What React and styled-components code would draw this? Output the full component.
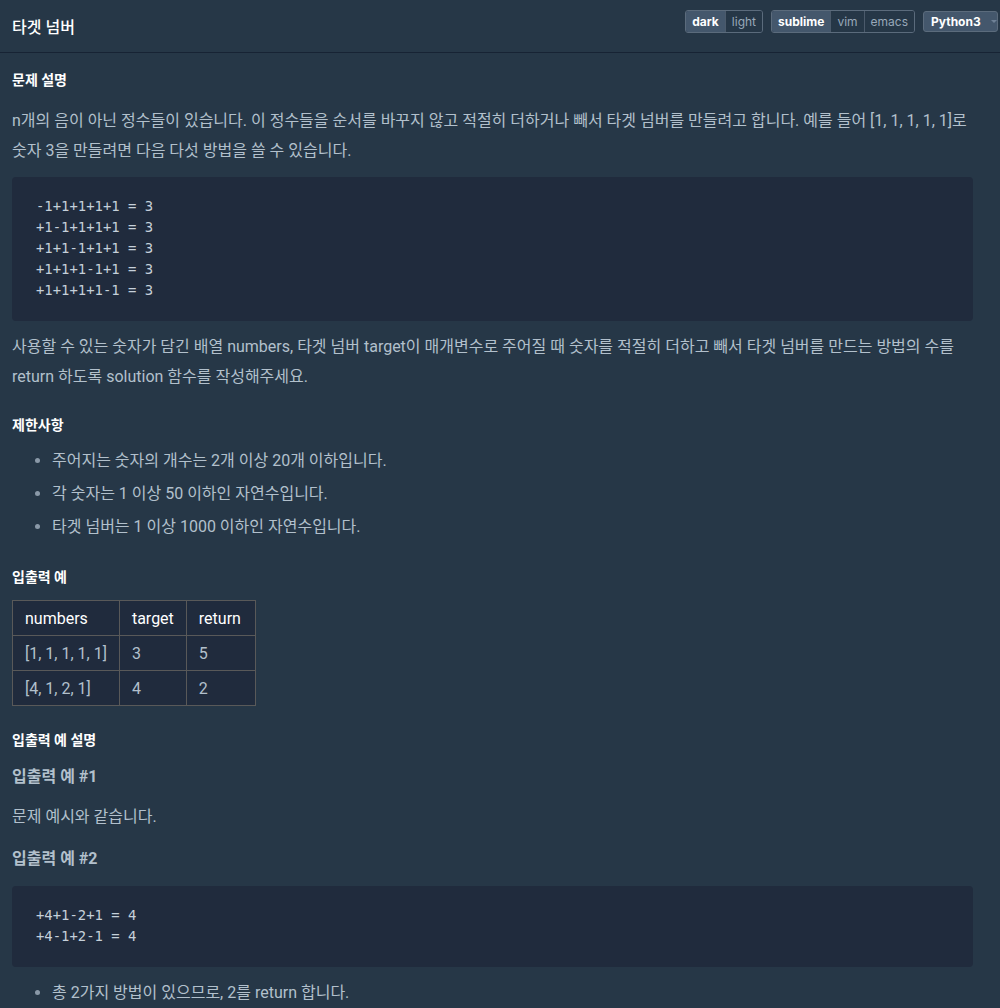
import React from 'react'
import styled, { createGlobalStyle } from 'styled-components'

const GlobalStyle = createGlobalStyle`
    body {
        margin: 0;
        background-color: #263747;
        font-family: Roboto, "Noto Sans CJK KR", sans-serif;
        color: #b2c0cc;
    }
`

const Header = styled.header`
    height: 52px;
    display: flex;
    align-items: center;
    justify-content: space-between;
    padding: 0 2px 0 12px;
    border-bottom: 1px solid #172334;
`

const Title = styled.h4`
    margin: 0;
    font-size: 16px;
    font-weight: 500;
    color: #ffffff;
`

const Controls = styled.div`
    display: flex;
    gap: 8px;
    align-items: center;
    align-self: flex-start;
    margin-top: 10px;
`

const Group = styled.div`
    display: flex;
    border: 1px solid #5b6b7c;
    border-radius: 3px;
    overflow: hidden;
`

const Toggle = styled.button`
    height: 21px;
    padding: 0 6px;
    border: none;
    border-left: ${p => (p.first ? 'none' : '1px solid #4b5a6b')};
    background-color: ${p => (p.active ? '#44576c' : '#263747')};
    color: ${p => (p.active ? '#ffffff' : '#98a8b9')};
    font-family: Inter, sans-serif;
    font-weight: ${p => (p.active ? 700 : 400)};
    font-size: 12px;
`

const Select = styled.div`
    display: flex;
    align-items: center;
    gap: 10px;
    height: 21px;
    width: 75px;
    box-sizing: border-box;
    padding: 0 6px 0 7px;
    border: 1px solid #5b6b7c;
    border-radius: 3px;
    background-color: #44576c;
    color: #ffffff;
    font-family: Inter, sans-serif;
    font-weight: 700;
    font-size: 12px;
`

const Caret = styled.span`
    width: 0;
    height: 0;
    border-left: 3px solid transparent;
    border-right: 3px solid transparent;
    border-top: 3px solid #6f8196;
`

const Main = styled.main`
    padding: 17px 27px 0 12px;
`

const Heading = styled.h5`
    margin: ${p => p.top ?? 23}px 0 ${p => p.bottom ?? 16}px;
    font-size: 14px;
    line-height: 20px;
    font-weight: 700;
    color: #ffffff;
`

const SubHeading = styled.h6`
    margin: 15px 0 13px;
    font-size: 16px;
    line-height: 24px;
    font-weight: 700;
    color: #b2c0cc;
`

const P = styled.p`
    margin: 0 0 11px;
    font-size: 16px;
    line-height: 30px;
`

const Pre = styled.pre`
    margin: ${p => p.top ?? 0}px 0 11px;
    padding: 19px 24px 20px;
    background-color: #202b3d;
    border-radius: 4px;
    font-family: "DejaVu Sans Mono", monospace;
    font-size: 13.9px;
    line-height: 21px;
    color: #c5d0da;
`

const List = styled.ul`
    margin: 0 0 11px;
    padding-left: 40px;
`

const Item = styled.li`
    font-size: 16px;
    line-height: 30px;
    margin-bottom: 3px;
    &::marker {
        color: #8a99a8;
    }
`

const Table = styled.table`
    border-collapse: collapse;
    background-color: #202b3d;
    font-size: 16px;
`

const Th = styled.th`
    height: 34px;
    padding: 0 ${p => p.pr ?? 12}px 0 12px;
    text-align: left;
    font-weight: 400;
    color: #ffffff;
    border: 1px solid #595959;
    white-space: nowrap;
`

const Td = styled.td`
    height: 34px;
    padding: 0 12px;
    color: #b2c0cc;
    border: 1px solid #595959;
    white-space: nowrap;
`

const rows = [
    ['[1, 1, 1, 1, 1]', '3', '5'],
    ['[4, 1, 2, 1]', '4', '2'],
]

export default function App() {
    return (
        <>
            <GlobalStyle />
            <Header>
                <Title>타겟 넘버</Title>
                <Controls>
                    <Group>
                        <Toggle first active>dark</Toggle>
                        <Toggle>light</Toggle>
                    </Group>
                    <Group>
                        <Toggle first active>sublime</Toggle>
                        <Toggle>vim</Toggle>
                        <Toggle>emacs</Toggle>
                    </Group>
                    <Select>
                        Python3 <Caret />
                    </Select>
                </Controls>
            </Header>
            <Main>
                <Heading top={0}>문제 설명</Heading>
                <P>
                    n개의 음이 아닌 정수들이 있습니다. 이 정수들을 순서를 바꾸지 않고 적절히 더하거나 빼서 타겟 넘버를 만들려고 합니다. 예를 들어 [1, 1, 1, 1, 1]로 숫자 3을 만들려면 다음 다섯 방법을 쓸 수 있습니다.
                </P>
                <Pre>{`-1+1+1+1+1 = 3
+1-1+1+1+1 = 3
+1+1-1+1+1 = 3
+1+1+1-1+1 = 3
+1+1+1+1-1 = 3`}</Pre>
                <P>
                    사용할 수 있는 숫자가 담긴 배열 numbers, 타겟 넘버 target이 매개변수로 주어질 때 숫자를 적절히 더하고 빼서 타겟 넘버를 만드는 방법의 수를 return 하도록 solution 함수를 작성해주세요.
                </P>

                <Heading bottom={11}>제한사항</Heading>
                <List>
                    <Item>주어지는 숫자의 개수는 2개 이상 20개 이하입니다.</Item>
                    <Item>각 숫자는 1 이상 50 이하인 자연수입니다.</Item>
                    <Item>타겟 넘버는 1 이상 1000 이하인 자연수입니다.</Item>
                </List>

                <Heading top={25} bottom={13}>입출력 예</Heading>
                <Table>
                    <thead>
                        <tr>
                            <Th>numbers</Th>
                            <Th>target</Th>
                            <Th pr={14}>return</Th>
                        </tr>
                    </thead>
                    <tbody>
                        {rows.map(r => (
                            <tr key={r[0]}>
                                {r.map((c, i) => <Td key={i}>{c}</Td>)}
                            </tr>
                        ))}
                    </tbody>
                </Table>

                <Heading top={24} bottom={0}>입출력 예 설명</Heading>
                <SubHeading>입출력 예 #1</SubHeading>
                <P>문제 예시와 같습니다.</P>
                <SubHeading>입출력 예 #2</SubHeading>
                <Pre top={15}>{`+4+1-2+1 = 4
+4-1+2-1 = 4`}</Pre>
                <List>
                    <Item>총 2가지 방법이 있으므로, 2를 return 합니다.</Item>
                </List>
            </Main>
        </>
    )
}
